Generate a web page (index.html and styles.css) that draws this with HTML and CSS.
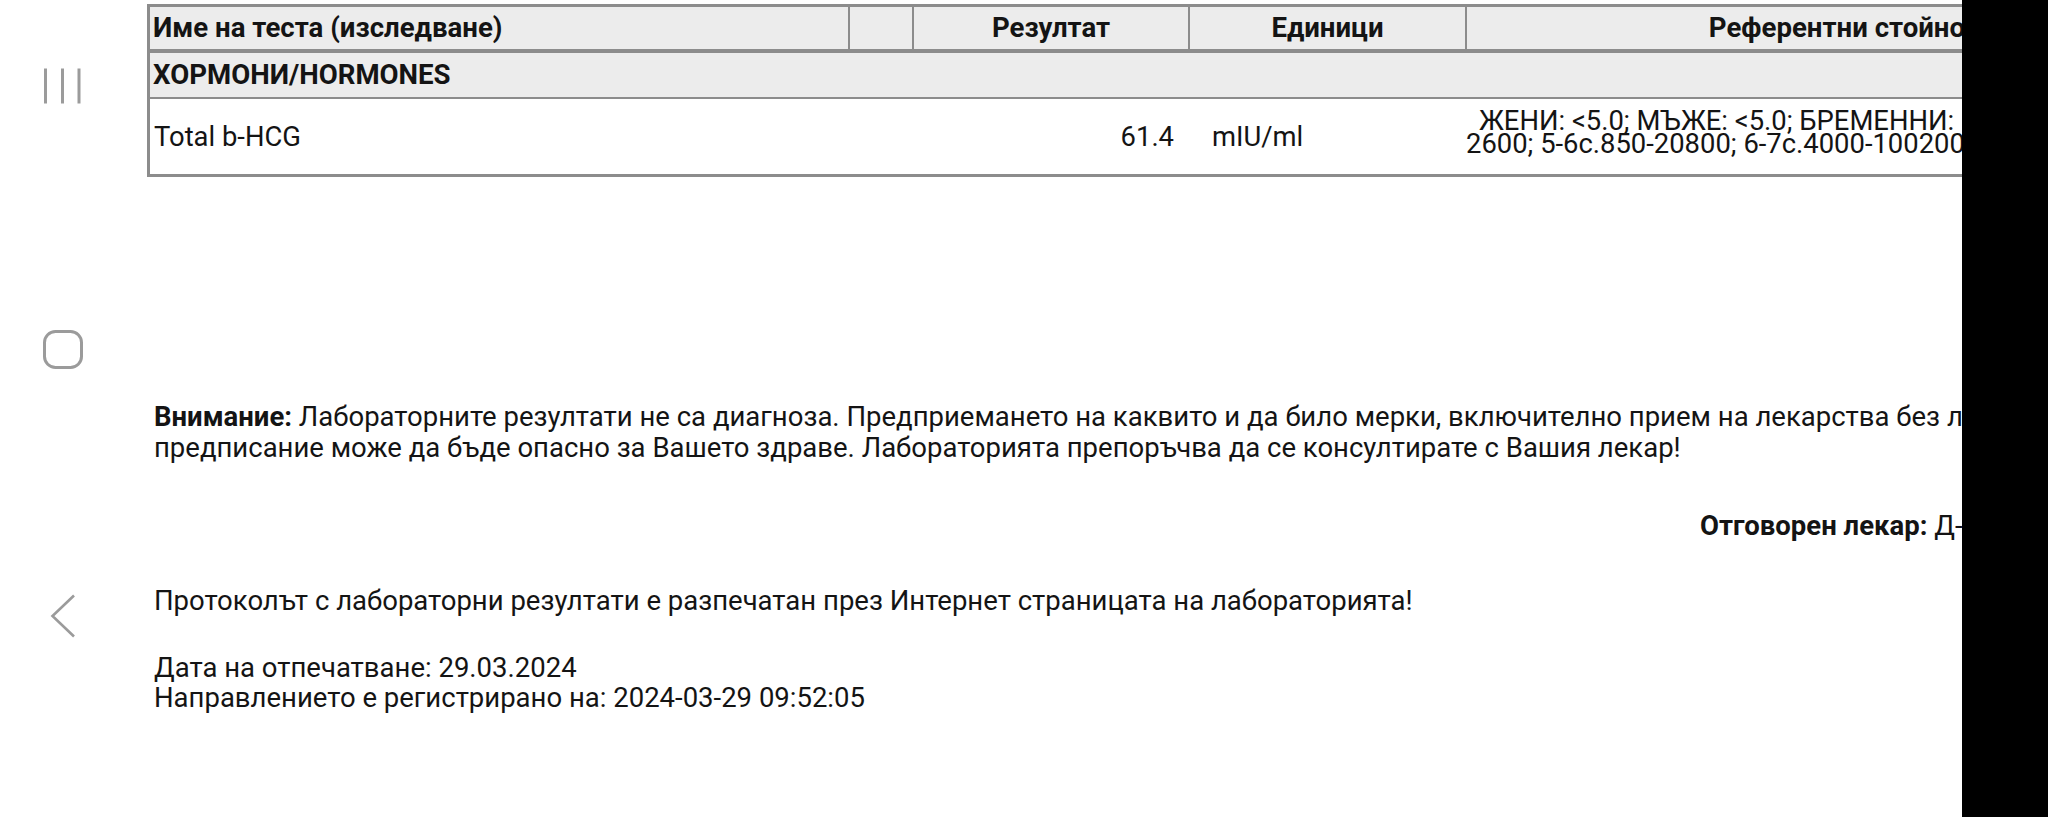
FILE: index.html
```html
<!DOCTYPE html>
<html lang="bg">
<head>
<meta charset="utf-8">
<title>Лабораторни резултати</title>
<link rel="stylesheet" href="styles.css">
</head>
<body>
<div class="screen">
  <nav class="sysnav">
    <svg class="nav-icon" width="40" height="38" viewBox="0 0 40 38"><path d="M3.5 1.5V36.5M20.5 1.5V36.5M37 1.5V36.5"/></svg>
    <svg class="nav-icon home" width="40" height="39" viewBox="0 0 40 39"><rect x="1.5" y="1.5" width="37" height="36" rx="11"/></svg>
    <svg class="nav-icon back" width="40" height="44" viewBox="0 0 40 44"><path d="M32 1.5L10.5 22L32 42.5"/></svg>
  </nav>
  <main class="report">
    <table class="results">
      <colgroup>
        <col class="c-name"><col class="c-flag"><col class="c-value"><col class="c-unit"><col class="c-ref">
      </colgroup>
      <thead>
        <tr>
          <th class="name">Име на теста (изследване)</th>
          <th></th>
          <th>Резултат</th>
          <th>Единици</th>
          <th>Референтни стойности</th>
        </tr>
      </thead>
      <tbody>
        <tr class="group"><td colspan="5">ХОРМОНИ/HORMONES</td></tr>
        <tr class="test">
          <td class="name">Total b-HCG</td>
          <td></td>
          <td class="value">61.4</td>
          <td class="unit">mIU/ml</td>
          <td class="ref"><span class="ref-line first">ЖЕНИ: &lt;5.0; МЪЖЕ: &lt;5.0; БРЕМЕННИ:</span><span class="ref-line">2600; 5-6с.850-20800; 6-7с.4000-100200</span></td>
        </tr>
      </tbody>
    </table>
    <p class="notice"><strong>Внимание:</strong> Лабораторните резултати не са диагноза. Предприемането на каквито и да било мерки, включително прием на лекарства без лекарско<br>предписание може да бъде опасно за Вашето здраве. Лабораторията препоръчва да се консултирате с Вашия лекар!</p>
    <p class="doctor"><strong>Отговорен лекар:</strong> Д-р</p>
    <p class="printed">Протоколът с лабораторни резултати е разпечатан през Интернет страницата на лабораторията!</p>
    <p class="dates">Дата на отпечатване: 29.03.2024<br>Направлението е регистрирано на: 2024-03-29 09:52:05</p>
  </main>
  <div class="cutout"></div>
</div>
</body>
</html>
```

FILE: styles.css
```css
html, body {
  margin: 0;
  padding: 0;
  background: #ffffff;
}

body {
  overflow: hidden;
  font-family: Roboto, "Noto Sans", "Liberation Sans", sans-serif;
  color: #141414;
}

.screen {
  position: relative;
  display: flex;
  width: 2048px;
  height: 817px;
  overflow: hidden;
}

.sysnav {
  flex: 0 0 124px;
  display: flex;
  flex-direction: column;
  align-items: center;
  padding-top: 67px;
  gap: 225px;
}

.nav-icon {
  display: block;
  fill: none;
  stroke: #9b9b9b;
  stroke-width: 3;
}

.nav-icon.home {
  margin-left: 2px;
}

.nav-icon.back {
  stroke-width: 2.6;
}

.report {
  flex: 0 0 2200px;
  padding-left: 23px;
}

.results {
  table-layout: fixed;
  width: 2104px;
  margin-top: 4px;
  border-collapse: separate;
  border-spacing: 0;
  border-left: 3px solid #8c8c8c;
  border-top: 3px solid #8c8c8c;
}

.c-name { width: 698px; }
.c-flag { width: 64px; }
.c-value { width: 276px; }
.c-unit { width: 277px; }
.c-ref { width: 786px; }

.results th {
  background: #ececec;
  font-size: 27.6px;
  font-weight: 700;
  line-height: 30px;
  padding: 6px 0;
  text-align: center;
  white-space: nowrap;
  border-bottom: 4px solid #8c8c8c;
}

.results th + th {
  border-left: 2px solid #8c8c8c;
}

.results th.name {
  text-align: left;
  padding-left: 3px;
}

.group td {
  background: #ececec;
  font-size: 27.6px;
  font-weight: 700;
  line-height: 30px;
  padding: 7px 3px;
  border-bottom: 2px solid #8c8c8c;
}

.test td {
  font-size: 27.4px;
  line-height: 31px;
  padding: 2px 0 0;
  vertical-align: middle;
  white-space: nowrap;
  border-bottom: 3px solid #8c8c8c;
}

.test td.name {
  padding-left: 4px;
}

.test td.value {
  text-align: right;
  padding-right: 14px;
}

.test td.unit {
  padding-left: 24px;
}

.test td.ref {
  line-height: 23px;
  padding: 11px 0 18px;
}

.ref-line {
  display: block;
  padding-left: 1px;
}

.ref-line.first {
  padding-left: 14px;
}

.report p {
  margin: 0;
  padding-left: 7px;
  font-size: 27.5px;
  line-height: 31px;
  white-space: nowrap;
}

.report p.notice {
  margin-top: 224px;
}

.report p.doctor {
  width: 1824px;
  margin-top: 47px;
  text-align: right;
}

.report p.printed {
  margin-top: 44px;
}

.report p.dates {
  margin-top: 37px;
  line-height: 30px;
}

.cutout {
  position: absolute;
  top: 0;
  right: 0;
  width: 86px;
  height: 100%;
  background: #000000;
}
```
